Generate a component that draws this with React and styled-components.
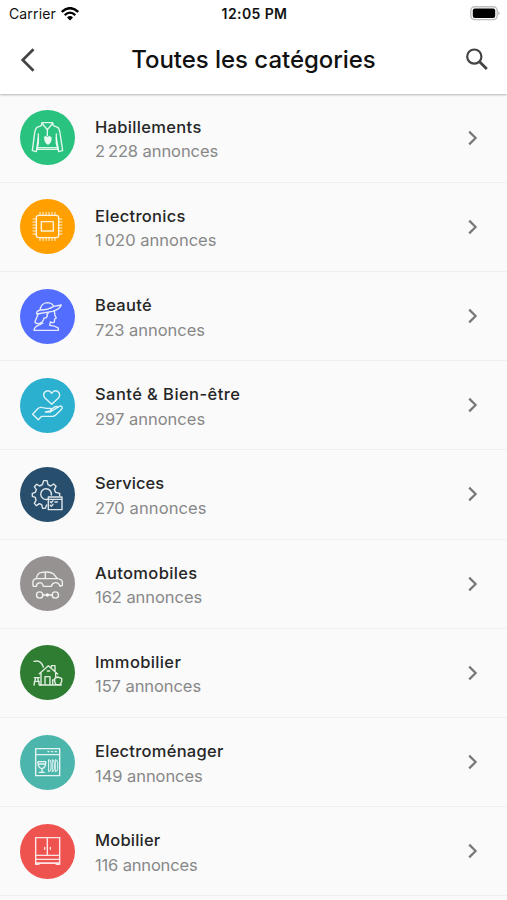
import React from 'react';
import styled, { createGlobalStyle } from 'styled-components';

const GlobalStyle = createGlobalStyle`
  body {
    margin: 0;
    background-color: #fafafa;
    font-family: Inter, 'Liberation Sans', sans-serif;
    overflow: hidden;
  }
`;

const Screen = styled.div`
  width: 100%;
  height: 900px;
  overflow: hidden;
  background-color: #fafafa;
`;

// White header with the status bar and the title
const Header = styled.header`
  position: relative;
  height: 93.6px;
  background-color: #fff;
  box-shadow: 0 1px 2px rgba(0, 0, 0, 0.28);
`;

const StatusBar = styled.div`
  display: grid;
  grid-template-columns: 1fr auto 1fr;
  align-items: center;
  height: 27px;
  padding: 0 7px 0 9px;
  box-sizing: border-box;
  color: #111;
`;

const Carrier = styled.div`
  display: flex;
  align-items: center;
  gap: 5px;
  font-size: 14px;
  letter-spacing: 0.14px;
`;

const Time = styled.div`
  font-size: 14px;
  font-weight: 600;
  letter-spacing: 0.4px;
`;

const Battery = styled.svg`
  justify-self: end;
`;

const TitleBar = styled.div`
  display: grid;
  grid-template-columns: 40px 1fr 40px;
  align-items: center;
  height: 66px;
  padding: 0 10px 0 8px;
`;

const Title = styled.h1`
  margin: 0 0 0 2px;
  font-size: 24px;
  font-weight: 500;
  line-height: 32px;
  text-align: center;
  white-space: nowrap;
  color: #111;
  letter-spacing: -0.04px;
`;

const IconButton = styled.button`
  display: flex;
  align-items: center;
  justify-content: center;
  width: 40px;
  height: 40px;
  padding: 0;
  border: none;
  background: none;
  color: #444;
`;

const List = styled.ul`
  margin: 0;
  padding: 0;
  list-style: none;
`;

const Row = styled.li`
  display: flex;
  align-items: center;
  height: 89.2px;
  padding: 0 24px 0 20px;
  box-sizing: border-box;
  border-bottom: 1px solid #efefef;
`;

const Avatar = styled.div`
  flex: none;
  width: 55px;
  height: 55px;
  border-radius: 50%;
  background-color: ${(props) => props.$color};
`;

const Drawing = styled.svg`
  display: block;
  width: 55px;
  height: 55px;
  fill: none;
  stroke: #fff;
  stroke-opacity: 0.85;
  stroke-width: 4.2;
  stroke-linecap: round;
  stroke-linejoin: round;
`;

const Texts = styled.div`
  flex: 1;
  margin-left: 20px;
  padding-top: 3px;
`;

const Name = styled.div`
  font-size: 16.5px;
  font-weight: 500;
  line-height: 24.5px;
  color: #262626;
  letter-spacing: ${(props) => props.$spacing}px;
`;

const Count = styled.div`
  font-size: 16.5px;
  line-height: 24.5px;
  color: #888;
  letter-spacing: ${(props) => props.$spacing}px;
`;

const Jacket = () => (
  <>
    <path d="M66 38H98L94 45L82 59L70 45ZM66 38L64 47L51 52Q45 56 43 76L37 122L49 125L55 84M98 38L100 47L113 52Q119 56 121 76L128 122L116 125L109 84" />
    <path d="M55 72V100L51 118H114L109 100V72M51 113H114M82 59V77" />
    <path d="M73 81Q78 76 82 82Q88 75 94 82Q96 99 84 104Q72 98 73 81Z" fill="#fff" fillOpacity="0.9" strokeWidth="1" />
  </>
);

const Chip = () => (
  <>
    <rect x="49" y="49" width="67" height="67" rx="7" />
    <rect x="64" y="68" width="36" height="28" />
    <path d="M60 49V40M69 49V40M78 49V40M87 49V40M96 49V40M105 49V40M60 116V125M69 116V125M78 116V125M87 116V125M96 116V125M105 116V125M49 60H39M49 69H39M49 78H39M49 87H39M49 96H39M49 105H39M116 60H126M116 69H126M116 78H126M116 87H126M116 96H126M116 105H126" strokeWidth="3" />
  </>
);

const Lady = () => (
  <>
    <path d="M60 63Q64 42 81 41Q96 41 101 52L124 48Q119 61 98 67L51 75Q46 68 60 63ZM60 63Q82 64 101 52" />
    <path d="M54 76L45 98Q44 104 56 104Q70 100 72 87Q79 89 82 81Q79 75 85 72M103 66L105 80L109 87L104 90L103 99Q99 103 91 99L89 109Q104 109 115 117V124H42Q43 112 60 107L69 102" />
  </>
);

const HandHeart = () => (
  <>
    <path d="M95 79L74 59Q67 48 76 41Q88 34 95 46Q103 34 114 41Q123 49 116 59Z" />
    <path d="M38 109L53 92Q59 86 68 89L80 91H92Q98 95 90 99L76 102H91L120 84Q128 84 126 92L108 110Q103 115 97 115H65L55 125Z" />
    <path d="M93 95L106 86Q111 84 113 88" />
  </>
);

const GearTask = () => (
  <>
    <path d="M80 114L76 124H68L65 113L58 110L49 116L43 109L48 100L46 91L37 88V79L46 76L49 68L43 59L50 52L59 57L67 53L71 41H81L84 53L92 57L101 51L108 58L103 68L107 76L119 79V86" />
    <path d="M82 97A16 16 0 1 1 94 84" />
    <path d="M85 90H126V128H85ZM85 97H126M91 104L94 107L99 101M91 115L94 118L99 112M105 105H112" />
  </>
);

const Car = () => (
  <>
    <path d="M49 91H40Q36 76 43 70L49 67Q53 51 62 50Q89 45 101 54L112 68Q126 70 127 77V88L120 91Q116 79 106 80Q96 81 94 91H70Q68 80 59 80Q50 81 49 91ZM50 68H112M76 49V68" />
    <circle cx="59" cy="117" r="9.5" />
    <circle cx="106" cy="117" r="9.5" />
    <path d="M69 117H96" />
    <circle cx="82" cy="117" r="3" fill="#fff" />
  </>
);

const House = () => (
  <>
    <path d="M42 49Q63 43 70 66M58 86L85 62L113 87M63 83V120M107 82V96M94 66V62H105V77" />
    <path d="M75 120V95H90V120M58 120H124M82 78H89M98 119V105H102M43 98H58M47 98L42 120M53 98L58 120M43 109H58M104 100L113 96L125 100V110L120 119H108L104 110Z" />
  </>
);

const Dishwasher = () => (
  <>
    <path d="M47 41H119V122H47ZM47 59H119M84 50H87M95 50H98M106 50H109" />
    <path d="M54 80H77Q78 99 66 101Q53 99 54 80ZM66 101V112M58 112H73M56 87H76" />
    <path d="M87 74Q93 74 93 85V100Q93 110 87 110ZM98 74Q103 74 103 85V100Q103 110 98 110ZM107 74Q113 74 113 85V100Q113 110 107 110Z" strokeWidth="3" />
  </>
);

const Wardrobe = () => (
  <>
    <path d="M47 41H119V121H110L106 118H60L55 121H47ZM82 41V94M47 94H119M47 106H119M47 117H119" strokeLinejoin="miter" />
    <path d="M74 70V76M91 70V76" />
  </>
);

const categories = [
  { name: 'Habillements', count: '2\u202f228', color: '#29c27f', Icon: Jacket, nameSpacing: 0.33, countSpacing: -0.08 },
  { name: 'Electronics', count: '1\u202f020', color: '#ffa000', Icon: Chip, nameSpacing: 0.3 },
  { name: 'Beauté', count: '723', color: '#536dfe', Icon: Lady, nameSpacing: 0.33, countSpacing: -0.04 },
  { name: 'Santé & Bien-être', count: '297', color: '#2bb0cf', Icon: HandHeart, nameSpacing: 0.43 },
  { name: 'Services', count: '270', color: '#274f6d', Icon: GearTask, nameSpacing: 0.05, countSpacing: 0.1 },
  { name: 'Automobiles', count: '162', color: '#969292', Icon: Car, nameSpacing: 0.33, countSpacing: -0.06 },
  { name: 'Immobilier', count: '157', color: '#2e7d32', Icon: House, nameSpacing: 0.36, countSpacing: -0.07 },
  { name: 'Electroménager', count: '149', color: '#4db6ac', Icon: Dishwasher, nameSpacing: 0.26, countSpacing: -0.06 },
  { name: 'Mobilier', count: '116', color: '#ef5350', Icon: Wardrobe, nameSpacing: 0.2, countSpacing: -0.17 },
];

const App = () => {
  return (
    <Screen>
      <GlobalStyle />
      <Header>
        <StatusBar>
          <Carrier>
            Carrier
            <svg width="18" height="14" viewBox="0 0 18 14">
              <path d="M0.8 5Q9 -2.7 17.2 5" fill="none" stroke="#000" strokeWidth="2.4" />
              <path d="M3.7 8.1Q9 3.3 14.3 8.1" fill="none" stroke="#000" strokeWidth="2.2" />
              <path d="M6 10.4Q9 7.8 12 10.4L9 13.5Z" fill="#000" />
            </svg>
          </Carrier>
          <Time>12:05 PM</Time>
          <Battery width="30" height="15" viewBox="0 0 30 15">
            <rect x="0.8" y="0.8" width="26.4" height="12.8" rx="3.8" fill="#fff" stroke="#bdbdbd" strokeWidth="1.4" />
            <rect x="2.8" y="2.5" width="22.4" height="9.4" rx="2" fill="#000" />
            <path d="M28.4 5.2Q30.6 7.2 28.4 9.2Z" fill="#aaa" />
          </Battery>
        </StatusBar>
        <TitleBar>
          <IconButton aria-label="Retour">
            <svg width="24" height="24" viewBox="0 0 24 24" fill="none" stroke="currentColor" strokeWidth="2.7">
              <path d="M17.5 1.2L6.7 12L17.5 22.8" />
            </svg>
          </IconButton>
          <Title>Toutes les catégories</Title>
          <IconButton aria-label="Rechercher">
            <svg width="24" height="24" viewBox="0 0 24 24" fill="none" stroke="currentColor" strokeWidth="2.2">
              <circle cx="9.3" cy="8.6" r="7.1" />
              <path d="M14.3 13.6L21.8 21.1" strokeWidth="2.8" />
            </svg>
          </IconButton>
        </TitleBar>
      </Header>

      {/* Categories */}
      <List>
        {categories.map(({ name, count, color, Icon, nameSpacing = 0, countSpacing = 0 }) => (
          <Row key={name}>
            <Avatar $color={color}>
              <Drawing viewBox="0 0 165 165">
                <Icon />
              </Drawing>
            </Avatar>
            <Texts>
              <Name $spacing={nameSpacing}>{name}</Name>
              <Count $spacing={countSpacing}>{count} annonces</Count>
            </Texts>
            <svg width="20" height="20" viewBox="0 0 20 20" fill="none" stroke="#777" strokeWidth="2.2">
              <path d="M6.2 3.6L12.6 10L6.2 16.4" />
            </svg>
          </Row>
        ))}
      </List>
    </Screen>
  );
};

export default App;
